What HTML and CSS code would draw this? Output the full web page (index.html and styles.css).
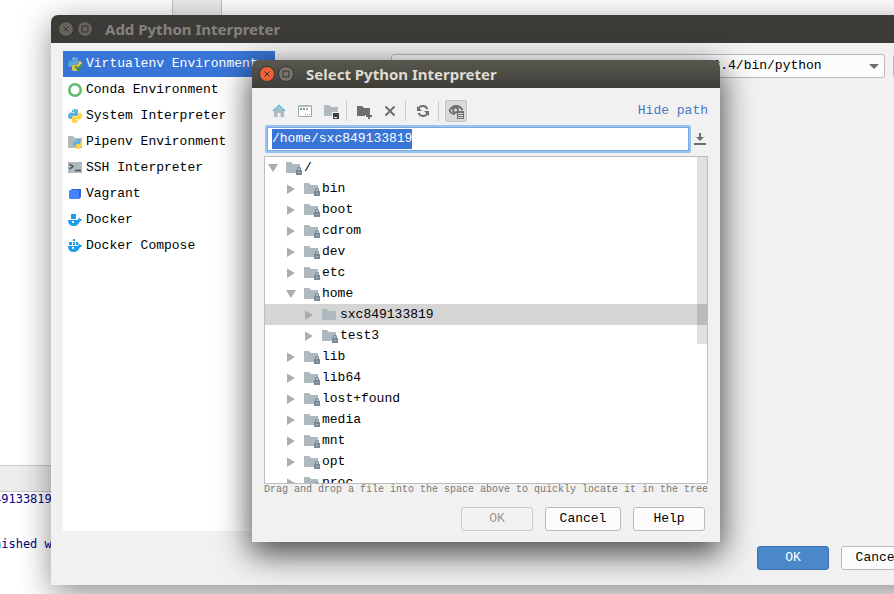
FILE: index.html
```
<!DOCTYPE html>
<html lang="en">
<head>
<meta charset="utf-8">
<title>Add Python Interpreter</title>
<link rel="stylesheet" href="styles.css">
</head>
<body>
<svg class="sprites" aria-hidden="true">
  <defs>
    <symbol id="python" viewBox="0 0 14 14">
      <path class="py-blue" d="M4 1.5Q4 0 7 0t3 1.5V5.500Q10 7 8.500 7H5.500Q4 7 4 8.500V10H2Q0 10 0 7t2-3.500h5V3H4z"/>
      <path class="py-yellow" d="M10.500 4H12q2 0 2 3t-2 3.500H7V11h3v1.500Q10 14 7 14t-3-1.500V9q0-1.500 1.500-1.500h3q2 0 2-2z"/>
      <path class="py-eye" d="M5 1h1v1H5zM8 12h1v1H8z"/>
    </symbol>
    <symbol id="folder" viewBox="0 0 16 16"><path d="M0 2h5l2 2h7v9H0z"/></symbol>
    <symbol id="lock" viewBox="0 0 6 8"><path fill-rule="evenodd" d="M1 3V1l1-1h2l1 1v2h1v5H0V3zm1 0h2V1H2zm0 2v1h2V5z"/></symbol>
    <symbol id="right" viewBox="0 0 12 12"><path d="M2 1.500L10 6l-8 5z"/></symbol>
    <symbol id="down" viewBox="0 0 12 12"><path d="M1 2h10l-5 8z"/></symbol>
    <symbol id="close" viewBox="0 0 16 16"><circle cx="8" cy="8" r="7.500"/><path d="M5.500 5.500l5 5m0-5l-5 5"/></symbol>
    <symbol id="maximize" viewBox="0 0 16 16"><circle cx="8" cy="8" r="7.500"/><path d="M5 5h6v6H5z"/></symbol>
  </defs>
</svg>

<div class="ide">
  <div class="ide-top"><div class="ide-tab"></div></div>
  <div class="ide-console">
    <div class="console-head"></div>
    <pre>49133819/


nished with</pre>
  </div>
</div>

<section class="window window-back">
  <header class="titlebar">
    <button class="orb" aria-label="Close"><svg><use href="#close"/></svg></button>
    <button class="orb" aria-label="Maximize"><svg><use href="#maximize"/></svg></button>
    <h1>Add Python Interpreter</h1>
  </header>
  <div class="back-body">
    <ul class="kinds">
      <li class="chosen"><svg viewBox="0 0 14 14"><g class="dim"><use href="#python" width="14" height="14"/></g><path class="tick" d="M7.500 9l2.500 4 3.500-5.500"/></svg>Virtualenv Environment</li>
      <li><svg viewBox="0 0 14 14"><circle class="ring" cx="7" cy="7" r="5.700"/></svg>Conda Environment</li>
      <li><svg viewBox="0 0 14 14"><use href="#python" width="14" height="14"/></svg>System Interpreter</li>
      <li><svg viewBox="0 0 14 14"><path class="grey" d="M0 1h5l2 2h7v10H0z"/><use href="#python" x="5" y="4" width="10" height="10"/></svg>Pipenv Environment</li>
      <li><svg viewBox="0 0 14 14"><path class="grey" d="M0 1h14v11H0z"/><path class="prompt" d="M1.500 3l3.500 2.500L1.500 8M7 9.500h6"/></svg>SSH Interpreter</li>
      <li><svg viewBox="0 0 14 14"><path class="box-dark" d="M3 2h10v8l-2 2z"/><path class="box" d="M1 4l1-1h9v9H2l-1-1z"/></svg>Vagrant</li>
      <li><svg viewBox="0 0 14 14"><path class="docker" d="M3 1h5v5H3zM0 7h10l1-3 1 2h2l-1 2h-1q-2 5-6 5-6 0-6-6z"/><path class="hole" d="M4 8h2v2H4z"/></svg>Docker</li>
      <li><svg viewBox="0 0 14 14"><path class="docker" d="M5 0h2v2H5zM1 3h3v3H1zm4 0h2v3H5zm3 0h2v3H8zM0 7h10l1-3 1 2h2l-1 2h-1q-2 5-6 5-6 0-6-6z"/><path class="hole" d="M4 8h2v2H4z"/></svg>Docker Compose</li>
    </ul>
    <div class="settings">
      <div class="combo">
        <select aria-label="Interpreter"><option>/home/sxc849133819/anaconda3/envs/test3.4/bin/python</option></select>
        <svg viewBox="0 0 12 12"><path d="M1 4h10L6 9z"/></svg>
      </div>
      <button class="btn more" aria-label="Browse">...</button>
    </div>
  </div>
  <footer class="back-foot">
    <button class="btn primary">OK</button>
    <button class="btn wide">Cancel</button>
  </footer>
</section>

<section class="window window-front">
  <header class="titlebar active">
    <button class="orb red" aria-label="Close"><svg><use href="#close"/></svg></button>
    <button class="orb" aria-label="Maximize"><svg><use href="#maximize"/></svg></button>
    <h1>Select Python Interpreter</h1>
  </header>
  <div class="front-body">
    <div class="toolbar">
      <button aria-label="Home"><svg viewBox="0 0 16 16"><path class="grey" d="M3 8l5-4 5 4v6H9.500v-4h-3v4H3z"/><path class="roof" d="M2 8l6-5.500L14 8"/></svg></button>
      <button aria-label="Project"><svg viewBox="0 0 16 16"><path class="frame" d="M1.500 2.500h13v11h-13z"/><path class="grey" d="M1 2h14v2H1z"/><path class="g1" d="M3 5h2v2H3z"/><path class="g2" d="M6 5h2v2H6z"/><path class="g3" d="M9 5h2v2H9z"/><path class="grey" d="M8 11h1v1H8zm2 0h1v1h-1zm2 0h1v1h-1z"/></svg></button>
      <button aria-label="Module"><svg viewBox="0 0 16 16"><path class="grey" d="M1 2h5l2 2h7v5H9v4H1z"/><path class="dark" d="M10 10h6v6h-6z"/><path class="white" d="M11 14h3v1h-3z"/></svg></button>
      <i></i>
      <button aria-label="New folder"><svg viewBox="0 0 16 16"><path class="ink" d="M1 3h5l2 2h6v5h-2v2H9v1H1zM12 10h2v2h2v2h-2v2h-2v-2h-2v-2h2z"/></svg></button>
      <button aria-label="Delete"><svg viewBox="0 0 16 16"><path class="cross" d="M3.500 3.500l9 9m0-9l-9 9"/></svg></button>
      <i></i>
      <button aria-label="Refresh"><svg viewBox="0 0 16 16"><path class="arc" d="M3 7q1-4 5-4 3 0 4.500 3M13 9q-1 4-5 4-3 0-4.500-3"/><path class="ink" d="M2 3v5h5zM14 13V8H9z"/></svg></button>
      <i></i>
      <button class="pressed" aria-label="Show hidden files"><svg viewBox="0 0 16 16"><path class="arc" d="M7 11Q3 11 1.500 7.500 4 3 8 3t6.500 4"/><circle class="arc" cx="7.500" cy="7" r="2.500"/><path class="ink" d="M9 8h7v8H9z"/><path class="slots" d="M10 10.500h5M10 12.500h5M10 14.500h5"/></svg></button>
      <a href="#">Hide path</a>
    </div>
    <div class="path-row">
      <label class="path"><input type="text" aria-label="Path" value="/home/sxc849133819" autofocus></label>
      <button aria-label="Recent paths"><svg viewBox="0 0 14 14"><path class="ink" d="M6 1h2v4h3L7 9 3 5h3zM1 11h12v2H1z"/></svg></button>
    </div>
    <ul class="tree">
      <li><svg class="arrow"><use href="#down"/></svg><svg class="dir"><use href="#folder"/><use href="#lock" x="10" y="7" width="6" height="8" class="lock"/></svg>/</li>
      <li class="l1"><svg class="arrow"><use href="#right"/></svg><svg class="dir"><use href="#folder"/><use href="#lock" x="10" y="7" width="6" height="8" class="lock"/></svg>bin</li>
      <li class="l1"><svg class="arrow"><use href="#right"/></svg><svg class="dir"><use href="#folder"/><use href="#lock" x="10" y="7" width="6" height="8" class="lock"/></svg>boot</li>
      <li class="l1"><svg class="arrow"><use href="#right"/></svg><svg class="dir"><use href="#folder"/><use href="#lock" x="10" y="7" width="6" height="8" class="lock"/></svg>cdrom</li>
      <li class="l1"><svg class="arrow"><use href="#right"/></svg><svg class="dir"><use href="#folder"/><use href="#lock" x="10" y="7" width="6" height="8" class="lock"/></svg>dev</li>
      <li class="l1"><svg class="arrow"><use href="#right"/></svg><svg class="dir"><use href="#folder"/><use href="#lock" x="10" y="7" width="6" height="8" class="lock"/></svg>etc</li>
      <li class="l1"><svg class="arrow"><use href="#down"/></svg><svg class="dir"><use href="#folder"/><use href="#lock" x="10" y="7" width="6" height="8" class="lock"/></svg>home</li>
      <li class="l2 current"><svg class="arrow"><use href="#right"/></svg><svg class="dir"><use href="#folder"/></svg>sxc849133819</li>
      <li class="l2"><svg class="arrow"><use href="#right"/></svg><svg class="dir"><use href="#folder"/><use href="#lock" x="10" y="7" width="6" height="8" class="lock"/></svg>test3</li>
      <li class="l1"><svg class="arrow"><use href="#right"/></svg><svg class="dir"><use href="#folder"/><use href="#lock" x="10" y="7" width="6" height="8" class="lock"/></svg>lib</li>
      <li class="l1"><svg class="arrow"><use href="#right"/></svg><svg class="dir"><use href="#folder"/><use href="#lock" x="10" y="7" width="6" height="8" class="lock"/></svg>lib64</li>
      <li class="l1"><svg class="arrow"><use href="#right"/></svg><svg class="dir"><use href="#folder"/><use href="#lock" x="10" y="7" width="6" height="8" class="lock"/></svg>lost+found</li>
      <li class="l1"><svg class="arrow"><use href="#right"/></svg><svg class="dir"><use href="#folder"/><use href="#lock" x="10" y="7" width="6" height="8" class="lock"/></svg>media</li>
      <li class="l1"><svg class="arrow"><use href="#right"/></svg><svg class="dir"><use href="#folder"/><use href="#lock" x="10" y="7" width="6" height="8" class="lock"/></svg>mnt</li>
      <li class="l1"><svg class="arrow"><use href="#right"/></svg><svg class="dir"><use href="#folder"/><use href="#lock" x="10" y="7" width="6" height="8" class="lock"/></svg>opt</li>
      <li class="l1"><svg class="arrow"><use href="#right"/></svg><svg class="dir"><use href="#folder"/><use href="#lock" x="10" y="7" width="6" height="8" class="lock"/></svg>proc</li>
    </ul>
    <p class="hint">Drag and drop a file into the space above to quickly locate it in the tree</p>
    <footer class="front-foot">
      <button class="btn" disabled>OK</button>
      <button class="btn wide">Cancel</button>
      <button class="btn">Help</button>
    </footer>
  </div>
</section>
<script src="select.js"></script>
</body>
</html>
```
FILE: select.js
```
const path = document.querySelector('.path input');
path.focus();
path.select();
```
FILE: styles.css
```
* { box-sizing: border-box; }
body {
  margin: 0;
  height: 100vh;
  overflow: hidden;
  position: relative;
  background: #fff;
  color: #000;
  font: 13px/20px "Liberation Mono", monospace;
}
button, input, select { font: inherit; color: inherit; margin: 0; }
ul { list-style: none; margin: 0; padding: 0; }
svg { display: block; flex: none; }
.sprites { position: absolute; width: 0; height: 0; }

.ide { height: 100%; display: flex; flex-direction: column; justify-content: space-between; }
.ide-top { height: 42px; padding-left: 172px; }
.ide-tab { width: 50px; height: 100%; background: #ececec; border: solid #c4c4c4; border-width: 0 1px; }
.ide-console { height: 129px; }
.console-head { height: 27px; background: #ececec; border: solid #c9cccc; border-width: 1px 0; }
.ide-console pre {
  margin: 0 0 0 -6px;
  color: #000080;
  font: 12px/15px "DejaVu Sans Mono", monospace;
}

.window { position: absolute; display: flex; flex-direction: column; background: #f1f1f1; border-radius: 7px 7px 0 0; }
.window-back { left: 51px; right: -35px; top: 15px; bottom: 9px; box-shadow: 0 8px 32px rgba(0,0,0,.45); }
.window-front { left: 252px; top: 60px; width: 468px; box-shadow: 0 10px 32px 2px rgba(0,0,0,.7); }

.titlebar {
  height: 28px;
  flex: none;
  display: flex;
  align-items: center;
  gap: 3px;
  padding: 0 7px;
  border-radius: 7px 7px 0 0;
  background: #3c3b37;
  color: #84827b;
}
.titlebar.active { background: linear-gradient(#595850, #3e3d38); color: #dfdbd2; }
.titlebar h1 { margin: 0 0 0 9px; font: bold 15px/20px "Noto Sans", sans-serif; }
.orb { width: 16px; height: 16px; padding: 0; border: 0; background: none; }
.orb svg { width: 16px; height: 16px; fill: #65635c; stroke: #35342f; }
.active .orb svg { fill: #77756c; }
.active .orb.red svg { fill: #ee6138; }

.back-body { flex: 1; display: flex; align-items: flex-start; gap: 116px; padding: 8px 12px 0; min-height: 0; }
.kinds { width: 212px; height: 480px; background: #fff; flex: none; }
.kinds li { height: 26px; display: flex; align-items: center; gap: 4px; padding-left: 5px; white-space: nowrap; }
.kinds svg { width: 14px; height: 14px; }
.kinds .chosen { background: #3875d7; color: #fff; }
.py-blue { fill: #5fb0d8; }
.py-yellow { fill: #ffd43b; }
.py-eye, .hole, .white { fill: #fff; }
.dim { opacity: .8; }
.tick { fill: none; stroke: #3a9a35; stroke-width: 2; }
.ring { fill: none; stroke: #5dbb68; stroke-width: 2.500; }
.grey { fill: #aeb9c0; }
.prompt { fill: none; stroke: #4b5358; stroke-width: 1.500; }
.box { fill: #4285ff; }
.box-dark { fill: #3165c8; }
.docker { fill: #1b9cec; }

.settings { flex: 1; display: flex; align-items: center; gap: 8px; padding-top: 3px; }
.combo { flex: 1; position: relative; }
.combo select {
  width: 100%;
  height: 24px;
  padding: 0 20px 0 24px;
  appearance: none;
  background: #fcfcfc;
  border: 1px solid #b9b9b9;
  border-radius: 3px;
}
.combo svg { position: absolute; right: 5px; top: 6px; width: 12px; height: 12px; fill: #6e6e6e; pointer-events: none; }
.btn { width: 72px; height: 24px; padding: 0; background: #fcfcfc; border: 1px solid #b9b9b9; border-radius: 3px; }
.btn.wide { width: 76px; }
.btn.more { width: 24px; }
.btn:disabled { background: #f1f1f1; border-color: #c9c9c9; color: #999; }
.btn.primary { background: #4a88c7; border-color: #3a70b8; color: #fff; }
.back-foot { display: flex; justify-content: flex-end; gap: 12px; padding: 0 12px 15px; }

.front-body { padding: 8px 12px 11px; }
.toolbar { display: flex; align-items: center; height: 29px; padding-left: 4px; }
.toolbar button { width: 22px; height: 22px; padding: 3px; margin-right: 4px; border: 0; background: none; border-radius: 3px; }
.toolbar button.pressed { background: #d9d9d9; box-shadow: inset 0 0 0 1px #c4c4c4; }
.toolbar svg { width: 16px; height: 16px; }
.toolbar i { width: 1px; height: 20px; margin-right: 6px; background: #c9c9c9; }
.toolbar a { margin-left: auto; color: #4a78c2; text-decoration: none; }
.roof { fill: none; stroke: #4fb9e3; stroke-width: 1.500; }
.frame { fill: #fff; stroke: #9aa7b0; }
.g1 { fill: #62b543; }
.g2 { fill: #40b6e0; }
.g3 { fill: #f98b50; }
.dark { fill: #3f3f3f; }
.ink { fill: #6e6e6e; }
.cross { fill: none; stroke: #6e6e6e; stroke-width: 2; }
.arc { fill: none; stroke: #6e6e6e; stroke-width: 1.800; }
.slots { stroke: #ddd; }

.path-row { display: flex; align-items: center; gap: 2px; padding-left: 1px; }
.path { flex: 1; display: flex; height: 28px; border: 2px solid #97c3f3; border-radius: 2px; }
.path input { width: 100%; border: 1px solid #7aa9dc; padding: 0 4px; background: #fff; outline: 0; }
.path input::selection { background: #3875d7; color: #fff; }
.path-row button { width: 14px; height: 14px; padding: 0; border: 0; background: none; margin-right: 1px; }
.path-row svg { width: 14px; height: 14px; }

.tree {
  height: 328px;
  margin-top: 3px;
  overflow: hidden;
  background: linear-gradient(#e0e0e0, #e0e0e0) right top / 10px 187px no-repeat, #fff;
  border: 1px solid #bdbdbd;
}
.tree li { height: 21px; display: flex; align-items: center; padding-left: 2px; }
.tree .l1 { padding-left: 20px; }
.tree .l2 { padding-left: 38px; }
.tree .current { background: rgba(0,0,0,.165); }
.arrow { width: 12px; height: 12px; margin-right: 7px; fill: #adadad; }
.dir { width: 16px; height: 16px; margin-right: 2px; fill: #adb8bf; }
.lock { fill: #798b99; }
.hint { margin: 0; font-size: 10px; line-height: 12px; color: #777; white-space: nowrap; }
.front-foot { display: flex; justify-content: flex-end; gap: 12px; padding: 11px 3px 0; }
```
